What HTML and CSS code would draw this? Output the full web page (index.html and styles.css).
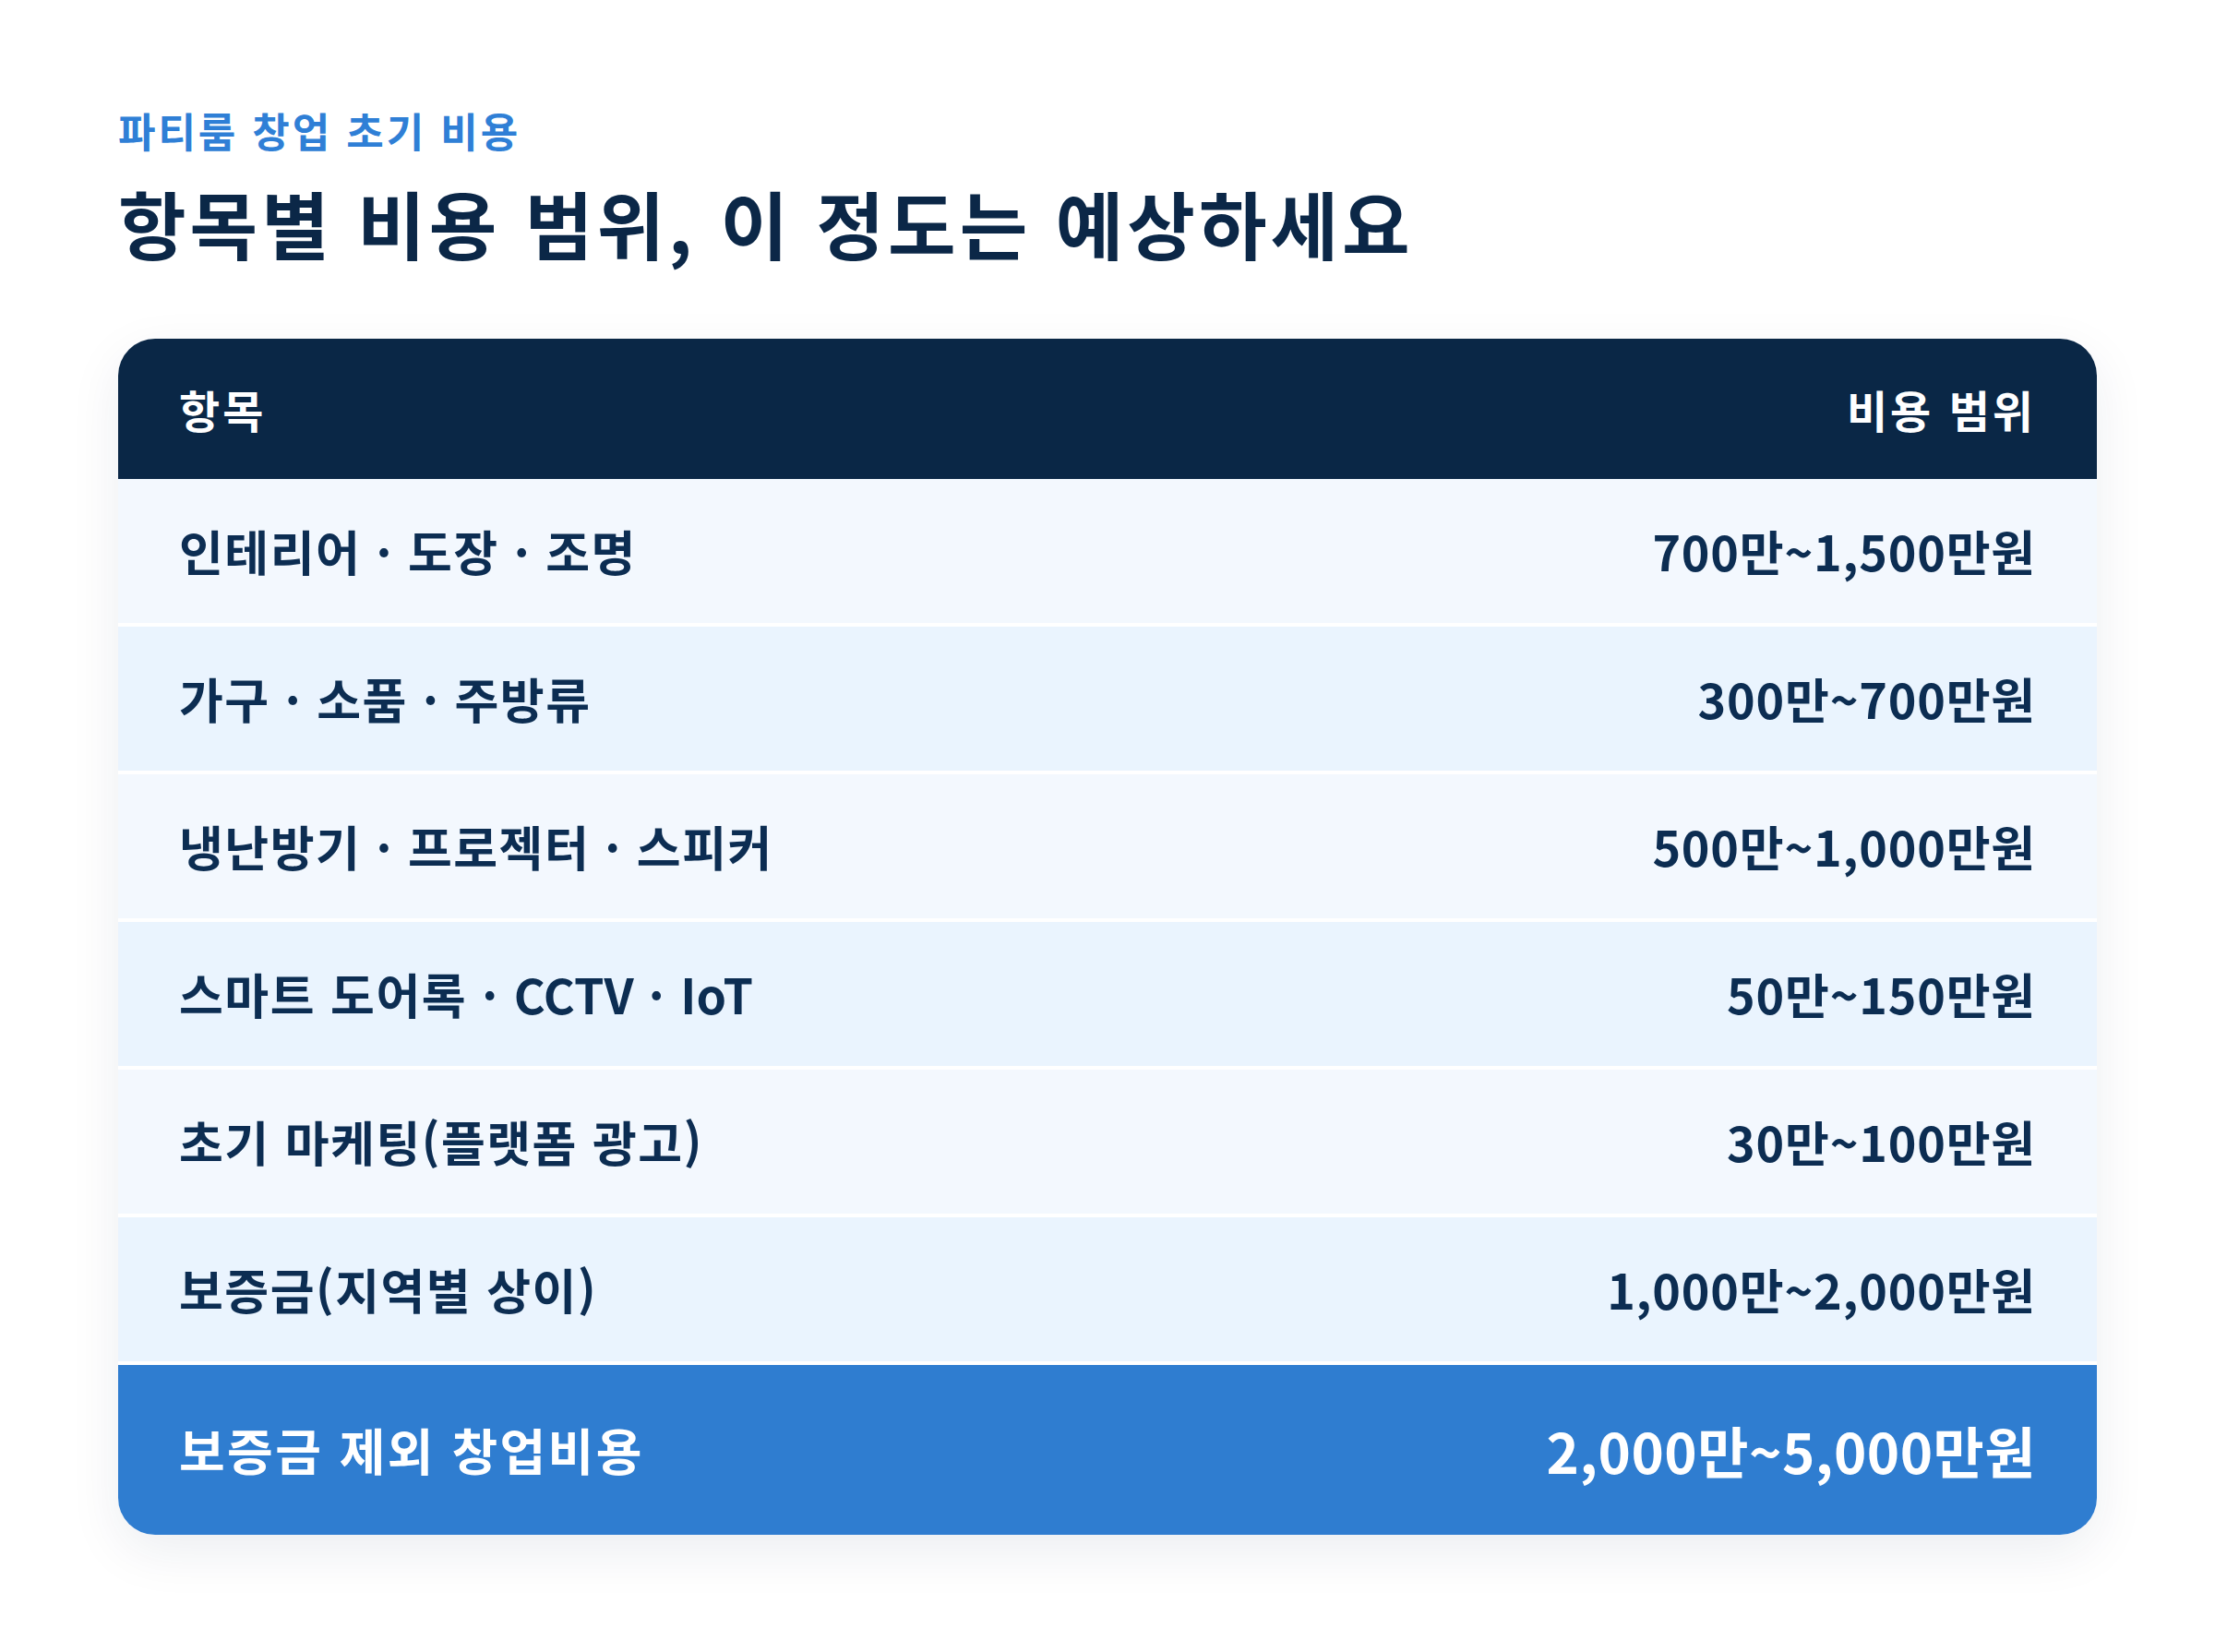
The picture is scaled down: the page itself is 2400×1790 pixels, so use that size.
FILE: index.html
```html
<!DOCTYPE html>
<html lang="ko">
<head>
<meta charset="utf-8">
<title>파티룸 창업 초기 비용</title>
<link rel="stylesheet" href="styles.css">
</head>
<body>
<main class="page">
  <p class="eyebrow">파티룸 창업 초기 비용</p>
  <h1 class="title">항목별 비용 범위, 이 정도는 예상하세요</h1>
  <section class="card">
    <div class="row head">
      <span>항목</span>
      <span>비용 범위</span>
    </div>
    <div class="row odd">
      <span>인테리어 · 도장 · 조명</span>
      <span class="val">700만~1,500만원</span>
    </div>
    <div class="row even">
      <span>가구 · 소품 · 주방류</span>
      <span class="val">300만~700만원</span>
    </div>
    <div class="row odd">
      <span>냉난방기 · 프로젝터 · 스피커</span>
      <span class="val">500만~1,000만원</span>
    </div>
    <div class="row even">
      <span>스마트 도어록 · <span class="latin">CCTV</span> · <span class="latin">IoT</span></span>
      <span class="val">50만~150만원</span>
    </div>
    <div class="row odd">
      <span>초기 마케팅(플랫폼 광고)</span>
      <span class="val">30만~100만원</span>
    </div>
    <div class="row even">
      <span>보증금(지역별 상이)</span>
      <span class="val">1,000만~2,000만원</span>
    </div>
    <div class="row total">
      <span>보증금 제외 창업비용</span>
      <span class="val big">2,000만~5,000만원</span>
    </div>
  </section>
</main>
</body>
</html>
```

FILE: styles.css
```css
* { box-sizing: border-box; }

html, body {
  margin: 0;
  padding: 0;
  background: #ffffff;
}

body {
  font-family: "Noto Sans CJK KR", "Noto Sans", sans-serif;
  color: #0b2a4d;
}

.page {
  padding: 115px 128px 120px;
}

.eyebrow {
  margin: 0;
  font-size: 44px;
  line-height: 1.2;
  font-weight: 700;
  letter-spacing: 2.9px;
  color: #2f7fd6;
}

.title {
  margin: 24px 0 0;
  font-size: 80px;
  line-height: 1.2;
  font-weight: 700;
  letter-spacing: 4px;
  color: #0b2747;
}

.card {
  margin-top: 79px;
  background: #ffffff;
  border-radius: 40px;
  overflow: hidden;
  box-shadow: 0 18px 56px rgba(11, 39, 71, 0.08);
}

.row {
  display: flex;
  justify-content: space-between;
  align-items: center;
  padding: 40px 66px;
  font-size: 52px;
  line-height: 76px;
  font-weight: 700;
  letter-spacing: 1.5px;
  color: #0c2d52;
  border-bottom: 4px solid #ffffff;
}

.latin {
  letter-spacing: 0;
}

.val {
  letter-spacing: 0.8px;
}

.row.head {
  padding: 40px 66px;
  font-size: 48px;
  line-height: 72px;
  letter-spacing: 3px;
  background: #0a2746;
  color: #ffffff;
  border-bottom: 0;
}

.row.odd { background: #f3f8fe; }
.row.even { background: #eaf4fe; }

.row.total {
  padding: 50px 66px;
  line-height: 84px;
  font-size: 54px;
  letter-spacing: 2.4px;
  background: #2f7dd0;
  color: #ffffff;
  border-bottom: 0;
}

.val.big {
  font-size: 60px;
  letter-spacing: 0.5px;
}
```
